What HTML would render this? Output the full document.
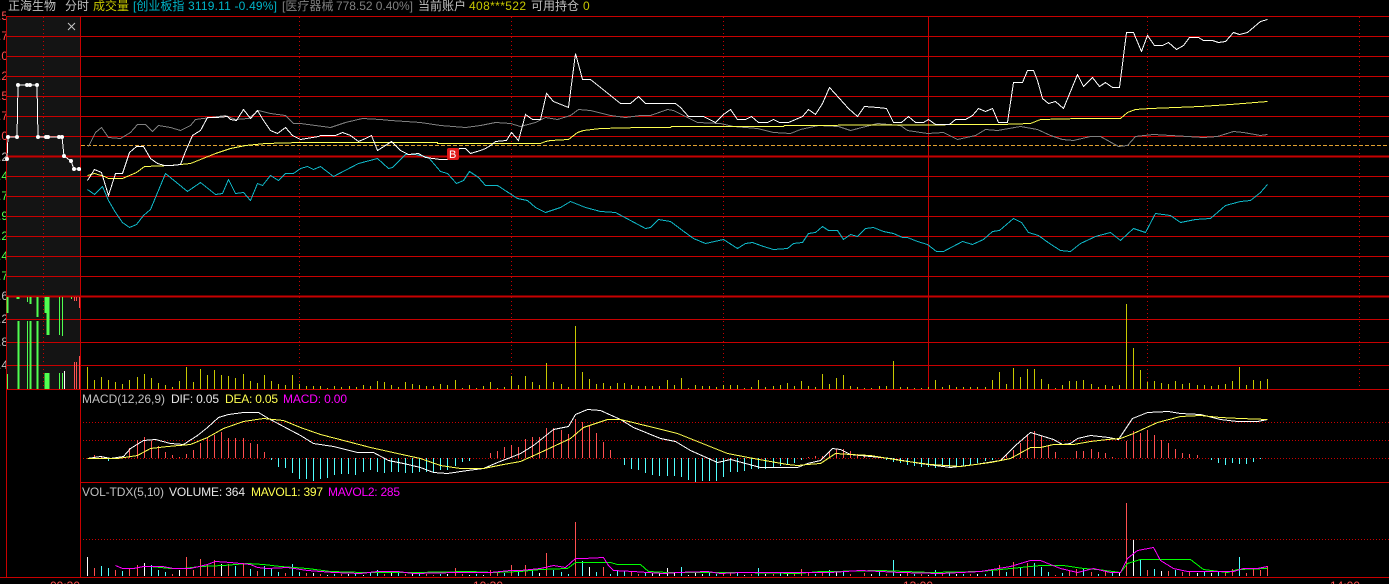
<!DOCTYPE html>
<html>
<head>
<meta charset="utf-8">
<style>
html,body{margin:0;padding:0;background:#000;width:1389px;height:584px;overflow:hidden}
svg{position:absolute;left:0;top:0;display:block}
svg text{font-family:"Liberation Sans","Noto Sans CJK SC",sans-serif;font-size:12px}
.l{fill:none;stroke-width:1;shape-rendering:crispEdges}
.g{shape-rendering:crispEdges;fill:none}
</style>
</head>
<body>
<svg width="1389" height="584" viewBox="0 0 1389 584" xmlns="http://www.w3.org/2000/svg">
<defs><clipPath id="c"><rect x="0" y="0" width="6" height="584"/></clipPath></defs>
<rect width="1389" height="584" fill="#000"/>
<rect x="7" y="17" width="73" height="372" fill="#141414"/>

<g class="g" stroke="#c80000" transform="translate(0 .5)">
<path d="M6 16H1389M6 36H1389M6 56H1389M6 76H1389M6 96H1389M6 116H1389M6 136H1389M6 176H1389M6 196H1389M6 216H1389M6 236H1389M6 256H1389M6 276H1389M6 319H1389M6 342H1389M6 365H1389M6 389H1389M80 482H1389M0 577H1389"/>
<path stroke-width="2" d="M6 156H1389M6 296H1389"/>
</g>
<g class="g" stroke="#c80000" transform="translate(.5 0)">
<path d="M6 16V577M80 16V577M928 16V389"/>
<path stroke-dasharray="1 3" d="M43 17V389M299 17V389M511 17V389M723 17V389M1147 17V389M1359 17V389"/>
</g>
<g class="g" stroke="#c80000" stroke-dasharray="1 2" transform="translate(0 .5)">
<path d="M83 422H1389M83 440H1389M83 458H1389M83 539H1389"/>
</g>
<path class="g" stroke="#e0a030" stroke-dasharray="4 2" d="M81 145.5H1389"/>

<!-- sidebar volume -->
<g class="g">
<path stroke="#50ff50" d="M7 297V313M8 297V313M17 297V299M18 297V299M19 297V299M27.5 297V302M30 297V304M31 297V304M37 297V317M38 297V317M45 297V313M46 297V313M47 297V335M48 297V335M49 297V335M59.5 297V335M62.5 297V336M71.5 297V299M7.5 374V389M18 321V389M19 321V389M27.5 321V389M30 321V389M31 321V389M37 321V389M38 321V389M45 373V389M46 373V389M47 373V389M48 373V389M49 373V389M59.5 373V389M62.5 373V389"/>
<path stroke="#ffffff" d="M64.5 371V389"/>
<path stroke="#ff5050" d="M74.5 297V301M76.5 297V301M79.5 297V308M74.5 362V389M76.5 362V389M79.5 356V389"/>
</g>

<!-- left intraday line -->
<polyline class="l" stroke="#fff" points="7,159 8,137 17,137 18,85 27,85 30,85 37,85 38,137 46,137 59,137 62,137 64,156 71,161 74,169 79,169 81,170"/>
<g fill="#fff"><circle cx="7" cy="159" r="2"/><circle cx="8" cy="137" r="2"/><circle cx="17" cy="137" r="2"/><circle cx="18" cy="85" r="2"/><circle cx="27" cy="85" r="2"/><circle cx="30" cy="85" r="2"/><circle cx="37" cy="85" r="2"/><circle cx="38" cy="137" r="2"/><circle cx="46" cy="137" r="2"/><circle cx="48" cy="137" r="2"/><circle cx="59" cy="137" r="2"/><circle cx="62" cy="137" r="2"/><circle cx="64" cy="156" r="2"/><circle cx="71" cy="161" r="2"/><circle cx="74" cy="169" r="2"/><circle cx="79" cy="169" r="2"/></g>
<path d="M68 23L75 30M75 23L68 30" stroke="#c8c8c8" stroke-width="1" fill="none"/>

<!-- main chart -->
<g transform="translate(.5 .5)">
<polyline class="l" stroke="#808080" points="88,146 95,132 101,127 108,137 120,138 130,132 137,124 145,124 152,131 158,125 170,127 180,130 190,125 195,119 210,117 225,115 235,119 248,118 258,110 270,113 285,115 293,123 300,123 315,125 330,127 345,122 362,118 380,119 390,120 420,122 440,125 465,127 480,125 495,122 510,123 520,126 535,122 545,117 557,119 570,115 578,109 590,110 610,115 625,117 640,115 650,115 667,109 673,110 687,117 697,122 720,123 733,126 757,128 773,132 790,133 800,129 818,125 838,126 850,130 877,123 900,125 907,130 927,133 943,132 957,139 975,135 985,129 997,130 1020,126 1037,129 1050,135 1062,139 1073,140 1090,136 1100,136 1118,146 1127,145 1135,136 1153,134 1187,136 1203,137 1217,136 1233,131 1243,132 1260,135 1267,134"/>
<polyline class="l" stroke="#ffff50" points="87,175 94,173 104,176 108,178 122,178 136,172 144,166 170,165 190,163 205,157 215,153 230,148 245,145 265,143 300,142 437,142 437,143 540,143 545,141 550,140 568,139 577,132 583,130 600,128 640,127 670,127 671,126 783,126 784,125 1000,124 1030,123 1040,119 1080,118 1120,118 1127,112 1135,109 1150,108 1200,106 1230,104 1267,101"/>
<polyline class="l" stroke="#10b8c8" points="87,189 94,194 102,186 108,200 115,212 122,222 129,227 136,224 143,215 150,209 155,197 165,173 187,191 200,182 215,194 222,193 228,179 235,193 243,192 250,200 257,183 262,185 270,175 278,180 285,173 293,173 300,168 307,166 313,169 320,166 333,176 358,163 377,158 388,168 392,167 405,154 415,154 428,157 440,171 447,173 456,183 463,180 469,171 478,177 485,185 497,185 517,198 527,200 535,207 545,212 560,207 570,201 585,207 600,211 615,212 630,220 645,228 650,227 658,219 670,221 682,230 693,238 705,243 723,239 737,248 745,243 752,242 763,246 773,249 787,248 793,243 802,242 808,233 815,232 822,226 828,230 837,230 843,239 850,234 857,236 865,228 873,227 883,231 893,233 902,237 907,237 917,241 927,244 936,251 943,251 962,241 972,244 983,239 992,231 999,230 1013,218 1021,222 1028,232 1038,235 1049,243 1060,250 1070,251 1080,243 1095,236 1110,232 1120,240 1133,228 1145,232 1155,213 1170,215 1180,222 1195,219 1210,218 1225,205 1240,201 1250,200 1260,192 1267,184"/>
<polyline class="l" stroke="#ffffff" points="87,180 94,169 101,172 108,195 115,173 122,173 129,152 136,146 143,146 150,158 157,163 164,165 171,165 180,164 185,151 192,135 200,130 207,117 216,117 227,116 230,119 236,120 243,109 250,118 257,110 263,120 270,130 277,133 285,127 292,135 300,139 318,136 320,135 335,135 342,132 350,135 358,141 365,138 371,135 377,150 385,145 391,141 400,150 408,154 418,153 425,157 440,159 447,159 459,148 465,148 470,153 480,150 485,148 490,145 495,141 506,140 511,132 518,140 525,114 532,119 540,119 546,93 553,101 568,107 575,53 582,79 590,79 610,95 620,103 630,103 638,96 645,103 675,103 680,107 688,116 703,116 715,122 723,114 730,109 737,119 745,119 751,116 758,122 767,122 773,119 779,122 788,122 802,116 808,109 815,114 822,103 829,87 839,98 848,108 857,116 864,106 877,107 886,108 893,122 901,122 908,116 915,122 923,122 928,119 935,124 949,124 955,119 965,119 972,115 978,108 985,111 992,108 998,122 1007,122 1013,82 1022,82 1027,70 1033,70 1037,80 1042,98 1048,103 1055,101 1063,108 1077,74 1083,86 1092,77 1099,86 1105,82 1112,87 1119,87 1126,32 1133,32 1141,51 1147,35 1154,45 1162,45 1168,42 1176,49 1183,45 1189,37 1198,37 1203,40 1212,40 1218,42 1225,41 1233,32 1239,34 1247,32 1260,21 1267,19"/>
</g>

<rect x="447" y="148" width="12" height="12" rx="2" fill="#e01818"/>
<text x="449" y="158" fill="#fff" style="font-size:11px">B</text>

<!-- volume yellow bars -->
<path class="g" transform="translate(.5 0)" stroke="#c8c800" d="M87 389V367M94 389V380M101 389V377M108 389V380M115 389V382M122 389V384M129 389V380M137 389V377M144 389V374M151 389V378M158 389V383M165 389V385M172 389V387M179 389V381M186 389V367M193 389V382M200 389V369M207 389V375M214 389V370M221 389V375M228 389V376M235 389V378M243 389V374M250 389V381M257 389V383M264 389V375M271 389V381M278 389V384M285 389V385M292 389V375M299 389V384M306 389V386M313 389V386M320 389V386M327 389V388M334 389V386M341 389V387M349 389V386M356 389V387M363 389V385M370 389V386M377 389V381M384 389V382M391 389V385M398 389V387M405 389V382M412 389V384M419 389V385M426 389V386M433 389V386M440 389V384M447 389V385M455 389V380M462 389V388M469 389V385M476 389V388M483 389V386M490 389V382M497 389V388M504 389V387M511 389V376M518 389V385M525 389V376M532 389V382M539 389V385M546 389V363M553 389V382M561 389V384M568 389V387M575 389V326M582 389V372M589 389V379M596 389V384M603 389V383M610 389V386M617 389V383M624 389V383M631 389V385M638 389V386M645 389V386M652 389V386M659 389V386M667 389V380M674 389V385M681 389V378M688 389V388M695 389V385M702 389V386M709 389V386M716 389V387M723 389V385M730 389V385M737 389V385M744 389V388M751 389V387M758 389V380M765 389V387M773 389V386M780 389V385M787 389V383M794 389V386M801 389V381M808 389V386M815 389V387M822 389V374M829 389V384M836 389V378M843 389V375M850 389V386M857 389V387M864 389V388M871 389V388M879 389V386M886 389V386M893 389V361M900 389V387M907 389V387M914 389V388M921 389V388M928 389V387M935 389V380M942 389V387M949 389V385M956 389V387M963 389V387M970 389V387M977 389V387M985 389V387M992 389V380M999 389V372M1006 389V384M1013 389V368M1020 389V377M1027 389V369M1034 389V369M1041 389V379M1048 389V384M1055 389V388M1062 389V385M1069 389V381M1076 389V381M1083 389V380M1091 389V384M1098 389V387M1105 389V385M1112 389V386M1119 389V385M1126 389V304M1133 389V348M1140 389V370M1147 389V382M1154 389V381M1161 389V383M1168 389V384M1175 389V381M1182 389V384M1189 389V383M1197 389V385M1204 389V385M1211 389V386M1218 389V385M1225 389V384M1232 389V381M1239 389V367M1246 389V385M1253 389V380M1260 389V381M1267 389V379"/>

<!-- MACD bars -->
<path class="g" transform="translate(.5 0)" stroke="#ff5050" d="M94 458V455M101 458V456M129 458V448M137 458V440M144 458V437M151 458V441M158 458V446M165 458V452M172 458V455M179 458V457M186 458V454M193 458V450M200 458V443M207 458V437M214 458V435M221 458V432M228 458V438M235 458V438M243 458V438M250 458V443M257 458V444M264 458V452M490 458V453M497 458V451M504 458V447M511 458V445M518 458V447M525 458V439M532 458V437M539 458V437M546 458V428M553 458V428M561 458V430M568 458V434M575 458V419M582 458V422M589 458V426M596 458V433M603 458V442M610 458V450M808 458V457M815 458V456M822 458V456M829 458V452M836 458V449M843 458V449M850 458V451M857 458V454M864 458V456M1006 458V455M1013 458V450M1020 458V443M1027 458V435M1034 458V431M1041 458V436M1048 458V446M1055 458V452M1076 458V451M1083 458V451M1091 458V449M1098 458V452M1105 458V453M1112 458V457M1126 458V441M1133 458V431M1140 458V433M1147 458V430M1154 458V435M1161 458V440M1168 458V443M1175 458V449M1182 458V453M1189 458V454M1197 458V455"/>
<path class="g" transform="translate(.5 0)" stroke="#50ffff" d="M108 458V461M271 458V460M278 458V467M285 458V468M292 458V473M299 458V479M306 458V479M313 458V481M320 458V479M327 458V478M334 458V475M341 458V474M348 458V474M355 458V475M363 458V472M370 458V470M377 458V472M384 458V473M391 458V472M398 458V472M405 458V473M412 458V473M419 458V472M426 458V472M433 458V473M440 458V470M447 458V470M455 458V466M462 458V462M469 458V461M624 458V465M631 458V469M638 458V470M645 458V473M652 458V475M659 458V476M667 458V476M674 458V476M681 458V477M688 458V480M695 458V482M702 458V481M709 458V481M716 458V481M723 458V477M730 458V472M737 458V472M744 458V471M751 458V469M758 458V469M765 458V469M773 458V467M780 458V466M787 458V464M794 458V463M801 458V460M886 458V460M893 458V462M900 458V463M907 458V465M914 458V466M921 458V467M928 458V467M935 458V468M942 458V467M949 458V468M956 458V467M963 458V466M970 458V465M977 458V463M985 458V461M992 458V460M1211 458V460M1218 458V463M1225 458V465M1232 458V463M1239 458V464M1246 458V464M1253 458V462M1260 458V459"/>
<g transform="translate(.5 .5)">
<polyline class="l" stroke="#ffffff" points="87,458 100,456 110,458 123,456 130,448 143,440 155,439 170,443 183,444 197,435 207,427 218,417 228,414 243,412 258,412 268,418 283,426 300,435 313,443 333,446 357,452 373,452 388,460 403,463 420,467 433,472 447,473 467,470 483,468 497,462 510,457 520,453 533,445 543,437 553,429 568,426 575,414 587,409 600,410 620,419 633,427 660,438 675,441 690,450 717,462 730,459 760,467 797,467 807,463 820,460 832,448 840,449 850,454 870,456 890,458 920,463 950,467 975,464 1000,460 1015,445 1030,432 1040,435 1053,439 1062,444 1070,443 1077,438 1090,435 1108,437 1118,439 1132,418 1147,412 1168,411 1180,413 1200,414 1220,419 1237,421 1257,421 1267,419"/>
<polyline class="l" stroke="#ffff50" points="87,458 117,458 137,455 150,448 167,446 190,444 207,437 223,428 243,421 263,418 283,420 300,427 320,434 347,441 370,447 397,453 420,458 440,465 460,468 483,468 503,464 520,461 540,452 570,438 583,427 607,419 620,419 653,427 677,433 707,445 727,453 753,458 787,464 797,465 807,464 820,463 835,453 850,454 870,455 900,460 930,464 960,466 990,462 1010,458 1030,447 1040,447 1053,444 1073,444 1090,441 1107,439 1120,438 1133,433 1157,422 1180,416 1200,415 1220,417 1240,418 1267,419"/>
</g>

<!-- VOL bars -->
<path class="g" transform="translate(.5 0)" stroke="#ff5050" d="M94 576V568M115 576V570M129 576V568M137 576V565M172 576V574M186 576V557M193 576V570M200 576V559M207 576V565M214 576V560M228 576V564M243 576V563M257 576V571M285 576V573M306 576V573M320 576V574M341 576V574M384 576V574M405 576V574M426 576V574M433 576V575M455 576V568M462 576V574M490 576V570M497 576V573M511 576V565M525 576V565M546 576V553M575 576V522M603 576V567M631 576V572M638 576V574M723 576V573M730 576V573M751 576V574M773 576V574M794 576V573M801 576V569M808 576V573M822 576V573M850 576V574M864 576V573M886 576V574M907 576V573M921 576V574M942 576V574M970 576V574M999 576V565M1013 576V562M1027 576V563M1055 576V575M1069 576V570M1076 576V569M1091 576V572M1105 576V572M1126 576V503M1147 576V570M1168 576V571M1182 576V572M1189 576V571M1225 576V572M1232 576V569M1246 576V573M1253 576V568M1260 576V570M1267 576V566"/>
<path class="g" transform="translate(.5 0)" stroke="#50ffff" d="M101 576V566M108 576V568M122 576V571M151 576V565M158 576V570M165 576V572M235 576V566M250 576V569M264 576V566M271 576V569M278 576V572M292 576V564M299 576V572M334 576V574M355 576V574M370 576V573M377 576V570M398 576V573M419 576V572M440 576V574M476 576V574M504 576V573M518 576V570M532 576V571M553 576V570M561 576V572M568 576V574M582 576V561M596 576V572M610 576V574M617 576V571M624 576V571M645 576V573M681 576V567M709 576V573M716 576V574M737 576V573M758 576V568M780 576V573M815 576V574M829 576V570M843 576V572M879 576V572M893 576V560M914 576V574M935 576V570M949 576V573M963 576V574M985 576V574M992 576V570M1006 576V572M1020 576V568M1034 576V563M1041 576V567M1048 576V572M1062 576V573M1083 576V568M1098 576V574M1112 576V573M1140 576V560M1154 576V569M1175 576V570M1204 576V572M1218 576V572M1239 576V557"/>
<path class="g" transform="translate(.5 0)" stroke="#ffffff" d="M87 576V557M144 576V563M179 576V570M221 576V564M313 576V573M327 576V575M348 576V574M363 576V575M391 576V573M412 576V574M447 576V574M469 576V575M483 576V575M539 576V573M589 576V567M652 576V573M659 576V573M667 576V568M674 576V573M688 576V575M695 576V573M702 576V574M744 576V575M765 576V574M787 576V572M836 576V572M871 576V574M900 576V574M928 576V575M956 576V574M977 576V574M1119 576V573M1133 576V540M1161 576V571M1197 576V573M1211 576V573"/>
<g transform="translate(.5 .5)">
<polyline class="l" stroke="#00ff00" points="150,566 170,568 183,568 200,566 223,565 247,563 263,564 280,566 307,568 330,571 363,572 413,572 470,571 493,572 520,571 540,569 567,568 575,562 610,562 617,564 640,564 648,571 667,572 740,572 797,573 820,571 830,571 880,570 930,572 980,571 1010,568 1040,565 1063,565 1083,568 1097,569 1120,572 1127,563 1140,559 1190,559 1203,569 1227,572 1237,569 1267,568"/>
<polyline class="l" stroke="#ff00ff" points="115,565 122,568 133,568 143,566 162,566 173,568 190,568 207,564 215,561 230,562 250,564 257,567 267,568 287,567 307,570 333,572 360,573 377,571 397,571 413,573 457,572 490,572 510,570 520,570 540,568 553,565 565,567 575,558 583,558 603,557 608,565 613,570 633,571 647,572 663,573 677,572 707,571 720,573 740,572 760,572 787,572 813,572 830,572 860,570 900,572 940,573 980,571 1010,566 1030,560 1040,560 1050,564 1060,568 1077,572 1093,568 1110,572 1120,572 1127,558 1137,550 1153,547 1160,560 1173,568 1187,571 1233,571 1243,568 1257,568 1267,566"/>
</g>

<!-- header text -->
<text x="8" y="10" fill="#c0c0c0">正海生物</text>
<text x="65" y="10" fill="#c0c0c0">分时</text>
<text x="93" y="10" fill="#c8c800">成交量</text>
<text x="133" y="10" fill="#00b4c8">[创业板指</text>
<text x="188" y="10" fill="#00b4c8" textLength="89">3119.11 -0.49%]</text>
<text x="282" y="10" fill="#808080">[医疗器械</text>
<text x="336" y="10" fill="#808080" textLength="77">778.52 0.40%]</text>
<text x="418" y="10" fill="#c0c0c0">当前账户</text>
<text x="469" y="10" fill="#c8c800" textLength="57">408***522</text>
<text x="531" y="10" fill="#c0c0c0">可用持仓</text>
<text x="583" y="10" fill="#c8c800">0</text>

<text x="82" y="403" fill="#c0c0c0" textLength="83">MACD(12,26,9)</text>
<text x="171" y="403" fill="#e8e8e8" textLength="48">DIF: 0.05</text>
<text x="225" y="403" fill="#ffff50" textLength="53">DEA: 0.05</text>
<text x="283" y="403" fill="#ff00ff" textLength="64">MACD: 0.00</text>
<text x="82" y="496" fill="#c0c0c0" textLength="82">VOL-TDX(5,10)</text>
<text x="169" y="496" fill="#e8e8e8" textLength="76">VOLUME: 364</text>
<text x="251" y="496" fill="#ffff50" textLength="72">MAVOL1: 397</text>
<text x="328" y="496" fill="#ff00ff" textLength="72">MAVOL2: 285</text>

<text x="50" y="590" fill="#ff5050">09:30</text>
<text x="473" y="590" fill="#ff5050">10:30</text>
<text x="903" y="590" fill="#ff5050">13:00</text>
<text x="1330" y="590" fill="#ff5050">14:00</text>

<!-- clipped left axis labels -->
<g clip-path="url(#c)" text-anchor="end">
<g fill="#ff5050">
<text x="8" y="20">.5</text><text x="8" y="40">.7</text><text x="8" y="60">.0</text><text x="8" y="80">.2</text><text x="8" y="100">.5</text><text x="8" y="120">.7</text><text x="8" y="140">.0</text>
</g>
<text x="8" y="161" fill="#c0c0c0">.2</text>
<g fill="#50ff50">
<text x="8" y="180">.4</text><text x="8" y="200">.7</text><text x="8" y="220">.9</text><text x="8" y="240">.2</text><text x="8" y="260">.4</text><text x="8" y="280">.7</text>
</g>
<g fill="#c0c0c0">
<text x="8" y="300">.6</text><text x="8" y="323">.2</text><text x="8" y="346">.8</text><text x="8" y="369">.4</text>
</g>
</g>
</svg>
</body>
</html>
